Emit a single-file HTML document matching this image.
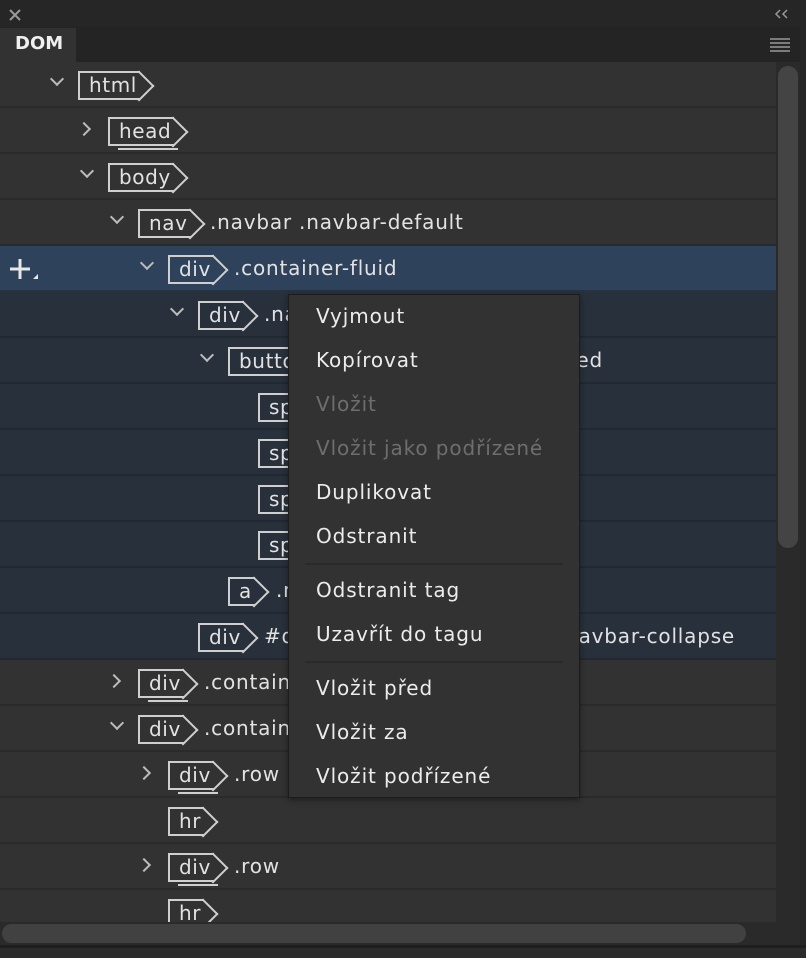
<!DOCTYPE html>
<html><head><meta charset="utf-8"><style>
*{box-sizing:border-box;margin:0;padding:0}
body{width:806px;height:958px;background:#2b2b2b;overflow:hidden;position:relative;font-family:"DejaVu Sans","Liberation Sans",sans-serif;color:#dadada}
.top{position:absolute;left:0;top:0;width:806px;height:27px;background:#262626}
.tabs{position:absolute;left:0;top:27px;width:800px;height:35px;background:#242424}
.tab{position:absolute;left:0;top:28px;width:76px;height:34px;background:#323232;font-weight:bold;font-size:18px;color:#f0f0f0;padding:5px 0 0 15px}
.list{position:absolute;left:0;top:62px;width:776px;height:860px;overflow:hidden}
.row{position:absolute;left:0;width:776px;height:46px;background:#323232;border-bottom:2px solid #2a2a2a}
.row.h{background:#28303b;border-bottom-color:#222831}
.row.s{background:#2e425c;border-bottom-color:#243246}
.chev{position:absolute;top:17px;width:10px;height:10px;border-right:2px solid #bbb;border-bottom:2px solid #bbb}
.chev.d{transform:rotate(45deg);top:12px}
.chev.r{transform:rotate(-45deg);top:16px}
.tag{position:absolute;top:9px;height:29px;border:2px solid #cfcfcf;border-right:none;padding:0 3px 0 9px;font-size:20px;letter-spacing:0.6px;line-height:24px;color:#e2e2e2}
.tag::after{content:"";position:absolute;right:-10px;top:2px;width:20px;height:20px;border-top:2px solid #cfcfcf;border-right:2px solid #cfcfcf;transform:rotate(45deg)}
.tag.c::before{content:"";position:absolute;left:8px;right:-4px;bottom:-6px;height:2px;background:#cfcfcf}
.cls{position:absolute;top:10px;font-size:20px;letter-spacing:0.8px;color:#e2e2e2;white-space:nowrap}
.vs{position:absolute;left:776px;top:62px;width:24px;height:860px;background:#2a2a2a}
.vs i{position:absolute;left:2px;top:4px;width:20px;height:482px;border-radius:10px;background:#444}
.rb{position:absolute;left:800px;top:0;width:6px;height:958px;background:#262626}
.hs{position:absolute;left:0;top:922px;width:800px;height:23px;background:#2a2a2a}
.hs i{position:absolute;left:2px;top:2px;width:744px;height:19px;border-radius:10px;background:#414141}
.bot{position:absolute;left:0;top:945px;width:806px;height:13px;background:#2b2b2b;border-top:3px solid #1e1e1e}
.menu{position:absolute;left:288px;top:294px;width:292px;height:504px;background:#323232;border:1px solid #1c1c1c;box-shadow:0 2px 6px rgba(0,0,0,.4)}
.mi{position:absolute;left:27px;font-size:20px;letter-spacing:0.9px;color:#ececec;white-space:nowrap}
.mi.dis{color:#6e6e6e}
.sep{position:absolute;left:16px;width:258px;height:2px;background:#2a2a2a}
</style></head><body>
<div class="top"></div>
<svg style="position:absolute;left:9px;top:9px" width="12" height="12"><path d="M1 1L11 11M11 1L1 11" stroke="#999" stroke-width="2"/></svg>
<svg style="position:absolute;left:774px;top:9px" width="16" height="10"><path d="M6 1L2 5L6 9M13 1L9 5L13 9" stroke="#999" stroke-width="1.5" fill="none"/></svg>
<div class="tabs"></div>
<div class="tab">DOM</div>
<svg style="position:absolute;left:770px;top:38px" width="20" height="14"><path d="M0 1H20M0 5H20M0 9H20M0 13H20" stroke="#999" stroke-width="1.6"/></svg>
<div class="list">
<div class="row" style="top:0"><i class="chev d" style="left:52px"></i><span class="tag" style="left:78px">html</span></div>
<div class="row" style="top:46px"><i class="chev r" style="left:79px"></i><span class="tag c" style="left:108px">head</span></div>
<div class="row" style="top:92px"><i class="chev d" style="left:82px"></i><span class="tag" style="left:108px">body</span></div>
<div class="row" style="top:138px"><i class="chev d" style="left:112px"></i><span class="tag" style="left:138px">nav</span><span class="cls" style="left:210px">.navbar .navbar-default</span></div>
<div class="row s" style="top:184px"><svg style="position:absolute;left:9px;top:12px" width="30" height="26"><path d="M11 1V21M1 11H21" stroke="#e8e8e8" stroke-width="3"/><path d="M24 21H29V16Z" fill="#e8e8e8"/></svg><i class="chev d" style="left:142px"></i><span class="tag" style="left:168px">div</span><span class="cls" style="left:234px">.container-fluid</span></div>
<div class="row h" style="top:230px"><i class="chev d" style="left:172px"></i><span class="tag" style="left:198px">div</span><span class="cls" style="left:264px">.navbar-header</span></div>
<div class="row h" style="top:276px"><i class="chev d" style="left:202px"></i><span class="tag" style="left:228px">button</span><span class="cls" style="left:330px">.navbar-toggle .collapsed</span></div>
<div class="row h" style="top:322px"><span class="tag" style="left:258px">span</span><span class="cls" style="left:330px">.sr-only</span></div>
<div class="row h" style="top:368px"><span class="tag" style="left:258px">span</span><span class="cls" style="left:330px">.icon-bar</span></div>
<div class="row h" style="top:414px"><span class="tag" style="left:258px">span</span><span class="cls" style="left:330px">.icon-bar</span></div>
<div class="row h" style="top:460px"><span class="tag" style="left:258px">span</span><span class="cls" style="left:330px">.icon-bar</span></div>
<div class="row h" style="top:506px"><span class="tag" style="left:228px">a</span><span class="cls" style="left:276px">.navbar-brand</span></div>
<div class="row h" style="top:552px"><span class="tag" style="left:198px">div</span><span class="cls" style="left:264px">#defaultNavbar1 .collapse .navbar-collapse</span></div>
<div class="row" style="top:598px"><i class="chev r" style="left:109px"></i><span class="tag c" style="left:138px">div</span><span class="cls" style="left:204px">.container</span></div>
<div class="row" style="top:644px"><i class="chev d" style="left:112px"></i><span class="tag" style="left:138px">div</span><span class="cls" style="left:204px">.container</span></div>
<div class="row" style="top:690px"><i class="chev r" style="left:139px"></i><span class="tag c" style="left:168px">div</span><span class="cls" style="left:234px">.row</span></div>
<div class="row" style="top:736px"><span class="tag" style="left:168px">hr</span></div>
<div class="row" style="top:782px"><i class="chev r" style="left:139px"></i><span class="tag c" style="left:168px">div</span><span class="cls" style="left:234px">.row</span></div>
<div class="row" style="top:828px"><span class="tag" style="left:168px">hr</span></div>
</div>
<div class="vs"><i></i></div>
<div class="rb"></div>
<div class="hs"><i></i></div>
<div class="bot"></div>
<div class="menu">
<div class="mi" style="top:9px">Vyjmout</div>
<div class="mi" style="top:53px">Kopírovat</div>
<div class="mi dis" style="top:97px">Vložit</div>
<div class="mi dis" style="top:141px">Vložit jako podřízené</div>
<div class="mi" style="top:185px">Duplikovat</div>
<div class="mi" style="top:229px">Odstranit</div>
<div class="sep" style="top:268px"></div>
<div class="mi" style="top:283px">Odstranit tag</div>
<div class="mi" style="top:327px">Uzavřít do tagu</div>
<div class="sep" style="top:366px"></div>
<div class="mi" style="top:381px">Vložit před</div>
<div class="mi" style="top:425px">Vložit za</div>
<div class="mi" style="top:469px">Vložit podřízené</div>
</div>
</body></html>
